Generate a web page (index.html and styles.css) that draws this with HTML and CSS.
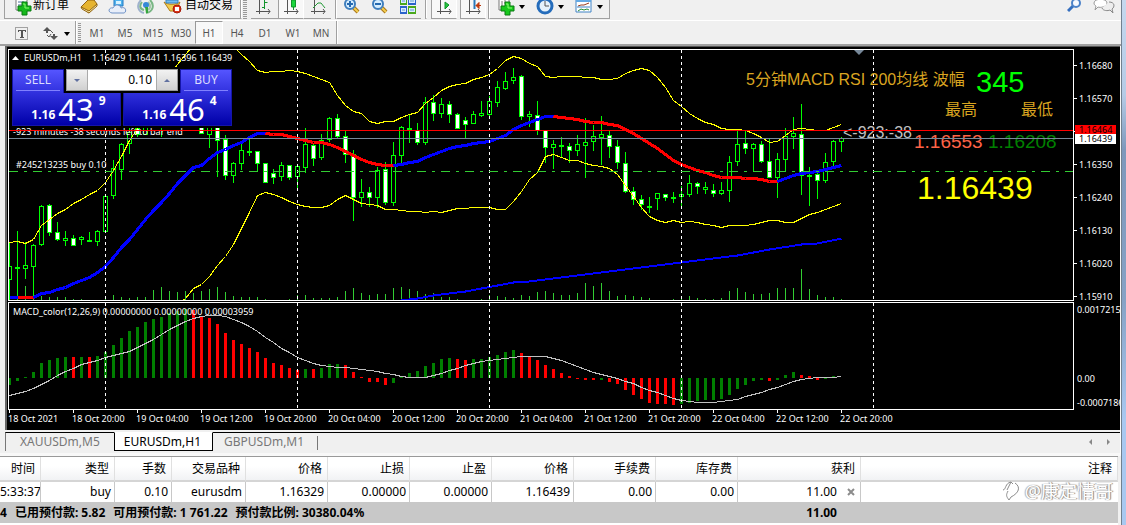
FILE: index.html
```html
<!DOCTYPE html>
<html lang="zh-CN">
<head>
<meta charset="utf-8">
<title>EURUSDm,H1</title>
<link rel="stylesheet" href="styles.css">
</head>
<body>
<div class="window">
  <header class="toolbar toolbar-main">
    <button class="tool tool-order"><svg width="18" height="18" viewBox="0 0 18 18"><path d="M2 0v10h11V0" fill="#fff" stroke="#777"/><path d="M4 2h6M4 5h4" stroke="#4a6a9a"/><path d="M8 2h5v4h4v5h-4v4H8v-4H4V6h4z" fill="#16b81c" stroke="#087a10"/><path d="M9 4h2v4h4" stroke="#8cff70" fill="none"/></svg><span>新订单</span></button>
    <button class="tool tool-book" aria-label="市场"><svg width="18" height="18" viewBox="0 0 18 18"><path d="M1 7 8 0h6l3 4-8 9z" fill="#e6b431" stroke="#916313"/><path d="m1 7 1 2 7 4 8-7V4l-8 7z" fill="#fff0a8" stroke="#916313"/></svg></button>
    <button class="tool tool-cloud" aria-label="账户"><svg width="20" height="18" viewBox="0 0 20 18"><path d="M6 0v6h9V0" fill="#51b3ed" stroke="#2179c3"/><path d="M8 1h5v3H8z" fill="#d8f2ff"/><path d="M4 13c-5-1-3-6 1-5 2-5 8-3 8 0 5-2 6 4 3 5z" fill="#e8eef9" stroke="#6e91c6"/></svg></button>
    <button class="tool tool-signal" aria-label="信号"><svg width="18" height="18" viewBox="0 0 18 18"><g fill="none" stroke-width="2"><path d="M4 0C-1 5 1 12 7 13" stroke="#9fb2cc"/><path d="M5 2c-3 4-2 7 2 8M13 0c5 5 3 12-4 13" stroke="#79b684"/><path d="M11 2c4 4 2 8-2 8" stroke="#a5c7a9"/></g><circle cx="9" cy="5" r="3" fill="#3588d8"/><path d="M8 7h3v6H9z" fill="#35a63d"/></svg></button>
    <button class="tool tool-auto"><svg width="20" height="18" viewBox="0 0 20 18"><path d="M1 2c4 3 12 3 16 0l-4 9H7z" fill="#f2cc50" stroke="#b07c18"/><path d="M3 0h12v3H3z" fill="#72bdf1" stroke="#3681bd"/><circle cx="14" cy="9" r="4" fill="#dd3518" stroke="#a71b0a"/><path d="M12 7h4v4h-4z" fill="#fff"/></svg><span>自动交易</span></button>
    <i class="rule"></i><i class="grip"></i>
    <button class="tool tool-chart" aria-label="柱状图"><svg width="16" height="18" viewBox="0 0 16 18"><path d="M3.5 0v14M0 11.5h14M12 9l2 2.5-2 2.5" stroke="#555" fill="none"/><path d="M8.5 0v9M8.5 2.5h3M6 7.5h3" stroke="#11942b"/></svg></button>
    <button class="tool tool-on" aria-label="蜡烛图"><svg width="16" height="18" viewBox="0 0 16 18"><path d="M3.5 0v14M0 11.5h14M12 9l2 2.5-2 2.5" stroke="#555" fill="none"/><path d="M9.5 0v10" stroke="#11942b"/><path d="M7.5 0h4v7h-4z" fill="#1ad63c" stroke="#11942b"/></svg></button>
    <button class="tool tool-chart" aria-label="折线图"><svg width="16" height="18" viewBox="0 0 16 18"><path d="M3.5 0v14M0 11.5h14M12 9l2 2.5-2 2.5" stroke="#555" fill="none"/><path d="M2 8 7 3l3 0 4 5" stroke="#239a36" fill="none"/></svg></button>
    <i class="rule"></i>
    <button class="tool tool-zoom" aria-label="放大"><svg width="18" height="18" viewBox="0 0 18 18"><path d="m10 7 5 5" stroke="#aa771b" stroke-width="4"/><path d="m10 7 5 5" stroke="#f4ce50" stroke-width="2"/><circle cx="7" cy="4" r="5" fill="#d6eeff" stroke="#3f7ebd" stroke-width="2"/><path d="M4 4h6M7 1v6" stroke="#266ab0" stroke-width="2"/></svg></button>
    <button class="tool tool-zoom" aria-label="缩小"><svg width="18" height="18" viewBox="0 0 18 18"><path d="m10 7 5 5" stroke="#aa771b" stroke-width="4"/><path d="m10 7 5 5" stroke="#f4ce50" stroke-width="2"/><circle cx="7" cy="4" r="5" fill="#d6eeff" stroke="#3f7ebd" stroke-width="2"/><path d="M4 4h6" stroke="#266ab0" stroke-width="2"/></svg></button>
    <button class="tool tool-zoom" aria-label="平铺窗口"><svg width="18" height="18" viewBox="0 0 18 18"><path d="M1 0h7v5H1zM9 6h8v8H9z" fill="#4aa81c"/><path d="M9 0h8v5H9zM1 6h7v8H1z" fill="#2b63cb"/><path d="M2 0h5v3H2zM10 0h6v3h-6zM2 8h5v4H2zM10 8h6v4h-6z" fill="#dcecff"/><path d="M3 10h3M11 10h4M3 1h3M11 1h4" stroke="#5d9ad0"/></svg></button>
    <i class="rule rule-wide"></i>
    <button class="tool tool-on" aria-label="自动滚动"><svg width="16" height="18" viewBox="0 0 16 18"><path d="M3.5 0v14M0 11.5h14M12 9l2 2.5-2 2.5" stroke="#555" fill="none"/><path d="m8 2 4 3-4 4z" fill="#23c43d" stroke="#11942b"/></svg></button>
    <button class="tool tool-on tool-shift" aria-label="图表平移"><svg width="16" height="18" viewBox="0 0 16 18"><path d="M3.5 0v14M0 11.5h14M12 9l2 2.5-2 2.5" stroke="#555" fill="none"/><path d="M8.5 0v9" stroke="#2979ba" stroke-width="2"/><path d="M10 5.500h5M10 5.500l3-3v6z" fill="#d94314" stroke="#b9360a"/></svg></button>
    <i class="rule"></i>
    <button class="tool tool-menu" aria-label="指标"><svg width="18" height="18" viewBox="0 0 18 18"><path d="M2 0v10h10V0" fill="#fff" stroke="#777"/><path d="M5 1v6M8 0v4" stroke="#777"/><path d="M8 2h5v4h4v5h-4v4H8v-4H4V6h4z" fill="#16c81c" stroke="#087a10"/><path d="M9 4h2v4h4" stroke="#8cff70" fill="none"/></svg><i class="caret"></i></button>
    <button class="tool tool-menu" aria-label="周期"><svg width="18" height="18" viewBox="0 0 18 18"><circle cx="9" cy="6" r="7" fill="#e6f2fb" stroke="#246cbb" stroke-width="3"/><path d="M9 1v5h4" fill="none" stroke="#555"/></svg><i class="caret"></i></button>
    <button class="tool tool-menu" aria-label="模板"><svg width="18" height="18" viewBox="0 0 18 18"><path d="M1 0h15v12H1z" fill="#fff" stroke="#4183c5"/><path d="M1 0h15v2H1z" fill="#64a9e4"/><path d="m3 6 3-1 3 0 5-2" fill="none" stroke="#963a1d"/><path d="M2 7h13" stroke="#4183c5"/><path d="m3 11 3-2 3 1 3-1 2 1" fill="none" stroke="#288d38"/></svg><i class="caret"></i></button>
    <div class="toolbar-end"></div>
    <div class="toolbar-right">
      <button class="tool" aria-label="搜索"><svg width="16" height="18" viewBox="0 0 16 18"><path d="m6 6-5 5" stroke="#356fbf" stroke-width="3"/><circle cx="9" cy="3" r="4" fill="#f6f9ff" stroke="#4c82c8" stroke-width="2"/></svg></button>
      <button class="tool" aria-label="消息"><svg width="24" height="18" viewBox="0 0 24 18"><path d="M1 3c0-5 13-5 13 0 0 4-7 5-9 4l-3 3 1-4C2 5 1 5 1 3z" fill="#fff" stroke="#999"/><path d="M9 8c1 3 6 3 8 2l3 3-1-4c3-2 3-7-3-7" fill="#eee" stroke="#888"/></svg></button>
    </div>
  </header>

  <nav class="toolbar toolbar-periods">
    <button class="tool tool-text" aria-label="文字标签"><svg width="14" height="14" viewBox="0 0 14 14"><path d="M.5.5h12v12H.5z" fill="none" stroke="#555" stroke-dasharray="1 1"/><path d="M3 3.500h8M3.500 3v2M10.500 3v2M5 10.500h4" stroke="#555" fill="none"/><path d="M7 3v8" stroke="#555" stroke-width="2"/></svg></button>
    <button class="tool tool-arrows" aria-label="箭头"><svg width="16" height="14" viewBox="0 0 16 14"><path d="m0 4 4-4 4 4H5v2H3V4zM7 9h3V7h2v2h3l-4 4z" fill="#555"/><path d="m4 8 2 2 2-3M7 3l3 3" fill="none" stroke="#555"/></svg><i class="caret"></i></button>
    <i class="rule"></i><i class="grip"></i>
    <div class="periods">
      <button>M1</button><button>M5</button><button>M15</button><button>M30</button><button class="current">H1</button><button>H4</button><button>D1</button><button>W1</button><button>MN</button>
    </div>
    <i class="rule rule-last"></i>
  </nav>

  <main class="chart">
    <svg class="plot" id="plot" viewBox="5 46 1115 384" role="img" aria-label="EURUSDm,H1"></svg>
    <section class="trade">
      <div class="trade-top">
        <button class="side">SELL</button>
        <div class="lots">
          <button aria-label="减少"><i class="down"></i></button>
          <input type="text" value="0.10" aria-label="手数">
          <button aria-label="增加"><i class="up"></i></button>
        </div>
        <button class="side">BUY</button>
      </div>
      <div class="trade-prices">
        <button class="price"><small>1.16</small><b>43</b><sup>9</sup></button>
        <button class="price"><small>1.16</small><b>46</b><sup>4</sup></button>
      </div>
    </section>
  </main>

  <nav class="tabs">
    <button class="tab">XAUUSDm,M5</button><button class="tab active">EURUSDm,H1</button><button class="tab">GBPUSDm,M1</button><i class="tab-rule"></i>
    <div class="tab-scroll"><button aria-label="向左"><i class="left"></i></button><button aria-label="向右"><i class="right"></i></button></div>
  </nav>

  <section class="terminal">
    <table>
      <colgroup><col class="c-time"><col class="c-type"><col class="c-lots"><col class="c-type"><col class="c-num"><col class="c-num"><col class="c-num"><col class="c-num"><col class="c-num"><col class="c-num"><col class="c-profit"><col></colgroup>
      <thead><tr><th>时间</th><th>类型</th><th>手数</th><th>交易品种</th><th>价格</th><th>止损</th><th>止盈</th><th>价格</th><th>手续费</th><th>库存费</th><th>获利</th><th class="note">注释</th></tr></thead>
      <tbody><tr><td>5:33:37</td><td>buy</td><td>0.10</td><td>eurusdm</td><td>1.16329</td><td>0.00000</td><td>0.00000</td><td>1.16439</td><td>0.00</td><td>0.00</td><td class="profit">11.00<button class="close" aria-label="平仓"><svg width="8" height="8" viewBox="0 0 8 8"><path d="m1 1 6 6m0-6L1 7" stroke="#8c8c8c" stroke-width="2"/></svg></button></td><td></td></tr></tbody>
      <tfoot><tr><td colspan="10"><div class="summary"><span>4</span><span>已用预付款: 5.82</span><span>可用预付款: 1 761.22</span><span>预付款比例: 30380.04%</span></div></td><td class="profit total">11.00</td><td></td></tr></tfoot>
    </table>
    <div class="watermark"><svg width="18" height="20" viewBox="0 0 18 20"><path d="M1 9c3 0 2-7 8-8l-4 8M9 1l2 2M13 2c6 4 4 10-4 14l-2 3M7 19c-3-4-3-5-1-9" fill="none" stroke="#8b8b8b"/></svg><span>@康定情哥</span></div>
  </section>
</div>
<aside class="edge"></aside>
<script src="chart.js"></script>
</body>
</html>
```

FILE: styles.css
```css
* { box-sizing: border-box; }
body {
  margin: 0;
  display: flex;
  min-height: 100vh;
  overflow: hidden;
  background: #f0f0f0;
  color: #000;
  font: 12px/16px "Noto Sans", "Noto Sans CJK SC", sans-serif;
}
button, input { font: inherit; color: inherit; margin: 0; padding: 0; border: 0; background: none; }
svg { display: block; flex: none; }
.window { flex: 1; min-width: 0; display: flex; flex-direction: column; }
.edge {
  width: 5px;
  border-left: 1px solid #71808f;
  background: linear-gradient(#c5d8ee 0, #b5cbe6 95px, #7d98bb 150px, #86a2c5 300px, #a8c8f0 420px);
}

/* toolbars */
.toolbar { display: flex; }
.toolbar-main { height: 20px; padding-left: 4px; overflow: hidden; }
.toolbar-main > * { border-bottom: 1px solid #a0a0a0; height: 19px; }
.tool { display: flex; flex: none; align-items: flex-start; }
.tool span { line-height: 10px; white-space: nowrap; }
.tool-order { width: 75px; padding-left: 9px; border-left: 1px solid #a0a0a0; gap: 1px; }
.tool-book { width: 29px; padding-left: 1px; }
.tool-cloud { width: 29px; }
.tool-signal { width: 26px; }
.tool-auto { width: 77px; gap: 2px; }
.rule { flex: none; width: 2px; border-left: 1px solid #a0a0a0; border-right: 1px solid #fff; }
.grip { flex: none; width: 9px; border: solid #f0f0f0; border-width: 0 4px 0 1px; background: repeating-linear-gradient(#999 0 1px, #f0f0f0 1px 2px); }
.tool-chart { width: 27px; padding-left: 5px; }
.tool-on { width: 26px; padding-left: 5px; background: #f8f8f8; border-left: 1px solid #a0a0a0; border-right: 1px solid #fff; }
.tool-chart + .rule { margin-left: 4px; }
.tool-on + .tool-chart { padding-left: 7px; }
.tool-zoom { width: 28px; padding-left: 6px; }
.rule-wide { margin: 0 4px; }
.tool-shift { margin-left: 3px; margin-right: 2px; }
.tool-menu { width: 39px; padding-left: 7px; gap: 4px; }
.caret { border: solid transparent; border-width: 4px 3px 0; border-top-color: #000; margin-top: 5px; }
.toolbar-end { width: 3px; border-right: 1px solid #a0a0a0; }
.toolbar-main .toolbar-right { display: flex; margin-left: auto; gap: 10px; border: 0; padding-right: 4px; }
.toolbar-periods { height: 26px; border-bottom: 2px solid #a0a0a0; border-top: 1px solid #fff; align-items: stretch; }
.tool-text { width: 43px; padding: 6px 0 0 15px; }
.tool-arrows { width: 32px; padding-top: 6px; gap: 5px; }
.toolbar-periods .grip { width: 6px; margin: 2px 0; border-right-width: 2px; }
.periods { display: flex; color: #555; font-size: 10px; line-height: 22px; }
.periods button { width: 28px; height: 23px; border: 1px solid transparent; }
.periods .current { border-color: #999 #fff #fff #999; background: #f8f8f8; }
.rule-last { margin-left: 1px; }

/* chart */
.chart { position: relative; margin-left: 5px; border-right: 1px solid #f8f8f8; background: #000; }
.plot { width: 100%; height: auto; }
.plot text { font: 9px "Noto Sans", sans-serif; fill: #fff; }
.plot .arial { font-family: "Liberation Sans", "Noto Sans CJK SC", sans-serif; }
.plot .s16 { font-size: 16px; }
.plot .s19 { font-size: 19px; }
.plot .s30 { font-size: 29px; }
.plot .s32 { font-size: 32px; }
.plot .gold { fill: #daa520; }
.plot .silver { fill: #c0c0c0; }
.plot .lime { fill: #0f0; }
.plot .tomato { fill: #ff6347; }
.plot .green { fill: #008000; }
.plot .yellow { fill: #ff0; }
.plot .black { fill: #000; }
.trade { position: absolute; left: 4px; top: 21px; padding: 2px 2px 2px 3px; background: #000; color: #fff; }
.trade-top { display: flex; gap: 2px; align-items: flex-start; }
.side { width: 52px; height: 24px; background: linear-gradient(#5555ff, #3030dd); border: 1px solid #1515a8; border-bottom: 0; color: #dcdcff; }
.side::after { content: ""; display: block; height: 1px; margin: 2px 3px 0; background: #8080ff; }
.lots { display: flex; width: 112px; height: 22px; border: 1px solid #999; background: #aaa; gap: 1px; color: #000; }
.lots button { width: 20px; background: linear-gradient(#f2f2f2, #d0d0d0); display: flex; justify-content: center; align-items: center; }
.lots input { flex: 1; min-width: 0; background: #fff; text-align: right; padding-right: 4px; }
.up, .down, .left, .right { border: 3px solid transparent; }
.down { border-top-color: #6070a0; border-bottom-width: 0; }
.up { border-bottom-color: #6070a0; border-top-width: 0; }
.trade-prices { display: grid; grid-template-columns: 1fr 1fr; gap: 2px; }
.price { height: 33px; background: linear-gradient(#3030dd, #0000a8); border: 1px solid #1515a8; border-top: 0; display: flex; justify-content: center; gap: 3px; padding-left: 4px; }
.price small { font-size: 12px; font-weight: 700; line-height: 16px; margin-top: 14px; }
.price b { font-size: 31px; line-height: 32px; font-weight: 400; }
.price sup { font-size: 12px; font-weight: 700; line-height: 16px; margin-left: 2px; }

/* chart tabs */
.tabs { display: flex; height: 26px; padding: 2px 0 0 5px; border-right: 1px solid #fff; border-bottom: 3px solid #f8f8f8; color: #777; }
.tab { height: 19px; padding: 0 14px; border-top: 1px solid #000; }
.tab:first-child { border-left: 1px solid #777; }
.tab.active { padding: 0 11px 0 9px; background: #fff; color: #000; border: 1px solid #000; border-top-color: #fff; }
.tab.active + .tab { padding: 0 13px 0 11px; }
.tab-rule { border-top: 1px solid #000; height: 19px; width: 2px; background: linear-gradient(#f0f0f0 3px, #777 3px 17px, #f0f0f0 17px) 0 0 / 1px 19px no-repeat; }
.tab-scroll { flex: 1; border-top: 1px solid #000; display: flex; justify-content: flex-end; gap: 12px; padding-right: 7px; }
.tab-scroll button { display: flex; align-items: center; width: 6px; height: 18px; }
.left { border-right-color: #888; border-left-width: 0; }
.right { border-left-color: #888; border-right-width: 0; }

/* terminal */
.terminal { position: relative; flex: 1; margin-right: 3px; border-top: 1px solid #999; background: #fff; }
table { width: 100%; border-collapse: separate; border-spacing: 0; table-layout: fixed; }
.c-time { width: 41px; }
.c-type { width: 74px; }
.c-lots { width: 57px; }
.c-num { width: 82px; }
.c-profit { width: 123px; }
th, td { padding: 0 3px 0 0; text-align: right; white-space: nowrap; overflow: hidden; }
th { height: 25px; padding-right: 5px; font-weight: 400; background: linear-gradient(#fff 40%, #f1f2f4); border-right: 1px solid #e0e0e0; border-bottom: 2px solid #d5d5d5; }
tbody td { height: 20px; border-right: 1px solid #c8c8c8; }
tbody td:last-child { border-right: 0; }
tfoot td { height: 21px; background: #c8c8c8; font-weight: 700; }
.summary { display: flex; gap: 8px; }
.profit { padding-right: 5px; }
.total { padding-right: 24px; }
.close { display: inline-flex; margin-left: 10px; }
.watermark { position: absolute; right: 5px; top: 24px; display: flex; gap: 5px; font-size: 18px; line-height: 20px; color: #fff; text-shadow: 1px 0 1px #777, -1px 0 1px #aaa; }
```

FILE: chart.js
```js
const plot = document.getElementById("plot");
const NS = "http://www.w3.org/2000/svg";

function add(name, attrs, parent = plot, text) {
  const el = document.createElementNS(NS, name);
  for (const key in attrs) el.setAttribute(key, attrs[key]);
  if (text) el.textContent = text;
  parent.appendChild(el);
  return el;
}
const col = i => 9 + 8 * i;

// kind (h rising, f falling, d doji), body top, body bottom, high, low
const candles = `h 266 279 242 300|d 267 267 231 300|h 265 268 242 279|h 245 266 244 297|h 206 244 205 246|f 205 232 204 236|f 232 239 222 241|h 238 240 231 246|f 238 245 235 246|h 237 239 236 245|d 240 240 232 242|h 231 241 230 246|h 196 231 195 232|h 168 195 160 199|h 144 169 143 180|h 132 143 128 154|f 128 134 126 137|h 120 134 118 135|h 110 120 105 125|h 105 120 100 137|h 95 110 90 120|h 90 100 85 110|f 90 105 85 120|f 100 115 95 120|f 110 133 100 134|h 120 134 115 148|f 120 140 115 177|f 139 175 135 180|h 163 175 162 183|h 150 163 144 170|d 151 151 139 156|f 151 163 151 171|f 163 182 163 183|f 173 177 169 184|h 165 176 162 181|f 165 177 165 180|h 166 176 165 188|h 144 167 128 173|f 145 158 143 166|h 140 157 134 160|h 118 139 117 142|f 118 136 114 138|f 136 154 131 163|f 154 197 150 221|h 192 197 179 207|f 192 197 187 207|h 170 197 167 208|f 169 202 162 205|h 155 202 142 206|h 127 155 126 163|d 128 128 114 143|f 130 142 123 145|h 102 142 97 145|f 102 113 95 121|h 104 113 98 118|f 104 114 101 123|f 114 128 113 129|f 120 124 117 138|h 114 123 111 124|h 113 115 101 117|h 101 114 96 118|h 87 102 81 107|h 81 88 72 90|h 77 80 68 84|f 76 116 75 120|h 114 116 111 127|f 115 130 101 135|f 130 147 130 163|h 144 147 140 169|d 145 145 137 158|f 146 150 143 163|h 144 150 135 156|h 142 145 118 178|h 136 141 125 151|h 134 137 116 165|f 135 146 131 158|f 146 162 140 169|f 163 191 152 193|f 191 199 187 205|f 199 204 195 210|d 206 206 197 213|h 193 198 193 210|f 194 197 194 201|d 197 197 192 203|h 194 196 186 208|h 183 194 175 197|f 183 186 182 194|h 187 189 182 194|f 190 193 184 197|h 190 193 182 195|h 162 190 156 202|h 144 161 131 166|f 143 148 130 154|h 144 148 143 171|f 144 161 141 163|f 161 177 139 178|h 159 177 153 198|h 136 159 128 171|h 133 136 117 149|f 134 175 104 195|d 175 175 167 206|f 174 180 171 199|h 162 180 153 183|h 141 161 140 166|h 138 141 137 152`
  .split("|").map(row => row.split(" "));

const volumes = [0,14,14,1,4,3,3,3,1,1,0,0,4,5,3,2,3,3,10,13,9,8,9,7,9,11,13,8,4,3,3,3,1,0,0,1,5,5,2,2,2,3,9,12,7,5,6,6,12,13,11,9,6,7,3,3,1,0,0,1,5,4,3,2,5,4,8,9,7,5,5,7,17,14,17,9,4,5,4,3,2,0,0,1,4,4,2,1,1,2,9,12,8,6,6,7,12,12,12,31,11,5,3,3,1];

const upper = [242,241,243,239,225,219,213,209,203,199,194,190,182,170,156,140,128,118,105,90,75,64,54,45,40,38,38,41,46,54,61,70,72,71,71,70,71,73,76,79,82,95,105,111,113,121,123,121,121,117,114,112,103,97,90,86,84,83,79,77,74,68,60,56,58,63,66,76,77,76,76,76,77,77,79,79,78,73,70,68,70,77,87,100,106,113,118,122,124,128,129,129,130,133,137,142,141,135,129,128,129,130,130,127,124];

const lower = [298,288,284,276,265,256,244,228,212,195,192,194,197,201,204,206,207,207,205,199,195,199,203,204,205,209,209,210,211,211,212,211,212,210,208,208,207,207,207,209,209,201,191,179,172,156,154,157,160,160,163,165,166,168,174,185,196,207,216,220,222,220,222,221,222,224,225,227,225,225,225,224,222,220,220,222,222,218,214,212,209,206,203];

const average = [297,297,297,297,293,292,289,287,283,280,277,272,266,257,247,239,229,219,210,202,193,183,175,167,165,158,152,149,145,142,137,133,133,134,134,136,138,140,142,142,144,147,151,155,159,162,164,165,165,164,162,161,157,154,151,148,146,145,143,142,141,138,135,129,125,122,119,116,116,117,118,119,121,122,122,124,125,129,133,138,143,148,154,160,164,167,170,172,175,177,177,177,178,178,179,181,181,178,175,173,172,171,169,167,165];

const slow = [[49,300],[51,298],[53,295],[55,293],[57,291],[59,288],[61,285],[63,282],[65,281],[67,279],[70,276],[74,272],[78,268],[82,264],[84,262],[87,259],[91,255],[95,249],[99,244],[101,243],[104,238]];

const macd = [-7,-3,1,6,15,18,20,21,21,21,21,22,26,33,40,47,51,56,59,61,65,67,69,68,61,60,54,45,38,34,30,26,20,15,13,10,8,9,9,10,14,14,13,6,1,-4,-4,-7,-5,1,5,7,12,15,19,20,19,18,19,19,21,23,26,28,25,21,18,13,9,5,2,-1,-2,-2,-2,-4,-6,-12,-17,-21,-25,-26,-26,-27,-26,-25,-23,-22,-22,-21,-17,-11,-7,-3,-2,-3,-2,3,6,3,2,-2,-1,2,0];
const falling = i => i === 8 || i === 10 || (i > 22 && i < 37) || i === 38 || (i > 41 && i < 48) || i === 56 || i === 57
  || (i > 63 && i < 84 && i !== 74) || i === 95 || (i > 98 && i < 102);

const signal = [395,393,391,388,384,380,375,371,368,364,362,360,357,355,353,351,347,343,339,334,329,325,321,318,316,315,315,316,319,322,326,331,337,342,348,352,357,360,363,365,366,367,367,368,369,370,371,373,374,376,377,377,377,375,373,370,368,365,363,361,360,359,358,357,356,356,356,356,358,360,363,366,369,372,374,376,378,381,383,387,390,392,395,398,400,401,402,402,402,401,400,399,396,394,392,389,387,384,381,379,378,377,377,377,376];

const defs = add("defs", {});
const clip = add("clipPath", { id: "frame" }, defs);
add("rect", { x: 9, y: 50, width: 1064, height: 250 }, clip);

// window bevel
add("rect", { x: 5, y: 46, width: 1115, height: 1, fill: "#555" });
add("rect", { x: 5, y: 46, width: 2, height: 384, fill: "#666" });

const main = add("g", { "clip-path": "url(#frame)", "shape-rendering": "crispEdges" });
const low = add("g", { "shape-rendering": "crispEdges" });

function line(points, color, width, parent) {
  add("polyline", { points: points.map(p => (p[0] + 0.5) + "," + (p[1] + 0.5)).join(" "), fill: "none", stroke: color, "stroke-width": width }, parent);
}
function label(x, y, value, cls = "") {
  add("text", { x, y, class: cls }, plot, value);
}

volumes.forEach((v, i) => add("rect", { x: col(i), y: 300 - v, width: 1, height: v, fill: "#32cd32" }, main));
candles.forEach(([kind, top, bottom, high, lowest], i) => {
  const x = col(i);
  add("rect", { x, y: high, width: 1, height: lowest - high, fill: "#0f0" }, main);
  add("rect", kind === "d"
    ? { x: x - 2, y: top, width: 5, height: 2, fill: "#0f0" }
    : { x: x - 1.5, y: +top + 0.5, width: 4, height: bottom - top, fill: kind === "f" ? "#fff" : "#000", stroke: "#0f0" }, main);
});

line(upper.map((y, i) => [col(i), y]), "#ff0", 1, main);
line([[182, 300], ...lower.map((y, i) => [col(i + 22), y])], "#ff0", 1, main);
[[0, 1, 0], [1, 3, 1], [3, 32, 0], [32, 48, 1], [48, 68, 0], [68, 96, 1], [96, 104, 0]].forEach(([from, to, red]) =>
  line(average.slice(from, to + 1).map((y, k) => [col(from + k), y]), red ? "#f00" : "#00f", 3, main));
line(slow.map(([i, y]) => [col(i), y]), "#00f", 2, main);

macd.forEach((v, i) => add("rect", { x: col(i) - (i ? 1 : 0), y: v > 0 ? 378 - v : 378, width: i ? 3 : 2, height: Math.abs(v), fill: falling(i) ? "#f00" : "#008000" }, low));
line(signal.map((y, i) => [col(i), y]), "#c0c0c0", 1, low);

[105, 297, 489, 681, 873].forEach(x =>
  add("path", { d: `M${x + 0.5} 50V300M${x + 0.5} 303V409`, stroke: "#fff", "stroke-dasharray": "3 3" }, low));

// overlays inside the chart
label(24, 61, "EURUSDm,H1");
label(92, 61, "1.16429 1.16441 1.16396 1.16439");
add("path", { d: "M12 60h7l-3.5-4z", fill: "#fff" });
label(13, 135, "-923 minutes -38 seconds left to bar end");
label(16, 168, "#245213235 buy 0.10");
label(13, 315, "MACD_color(12,26,9) 0.00000000 0.00000000 0.00003959");
label(746, 85, "5分钟MACD RSI 200均线 波幅", "arial s16 gold");
label(976, 92, "345", "arial s30 lime");
label(945, 115, "最高", "arial s16 gold");
label(1021, 115, "最低", "arial s16 gold");
label(843, 138, "<-923:-38", "arial s16 silver");
label(914, 148, "1.16553", "arial s19 tomato");
label(988, 148, "1.16208", "arial s19 green");
label(917, 199, "1.16439", "arial s32 yellow");
add("path", { d: "M854 50h10l-5 5z", fill: "#778899" });

const rules = add("g", { "shape-rendering": "crispEdges", fill: "none" });
add("path", { d: "M9 130.5H1073", stroke: "#f00" }, rules);
add("path", { d: "M9 138.5H1073", stroke: "#778899" }, rules);
add("path", { d: "M9 171.5H1073", stroke: "#32cd32", "stroke-dasharray": "9 6 3 6" }, rules);
add("path", { d: "M8.5 49.5H1073.5V300.5H8.5zM8.5 302.5H1073.5V409.5H8.5z", stroke: "#fff" }, rules);

// price and time axes
["1.16680", "1.16570", "", "1.16350", "1.16240", "1.16130", "1.16020", "1.15910"].forEach((value, i) => {
  const y = 65 + 33 * i;
  add("rect", { x: 1074, y, width: 3, height: 1, fill: "#fff" });
  if (value) label(1079, y + 4, value);
});
add("rect", { x: 1075, y: 125, width: 41, height: 10, fill: "#f00" });
label(1079, 133, "1.16464", "black");
add("rect", { x: 1075, y: 134, width: 41, height: 10, fill: "#fff" });
label(1079, 142, "1.16439", "black");
label(1077, 313, "0.0017215");
label(1077, 382, "0.00");
label(1077, 406, "-0.0007186");

["18 Oct 2021", "18 Oct 20:00", "19 Oct 04:00", "19 Oct 12:00", "19 Oct 20:00", "20 Oct 04:00", "20 Oct 12:00", "20 Oct 20:00", "21 Oct 04:00", "21 Oct 12:00", "21 Oct 20:00", "22 Oct 04:00", "22 Oct 12:00", "22 Oct 20:00"].forEach((value, i) => {
  add("rect", { x: 9 + 64 * i, y: 410, width: 1, height: 3, fill: "#fff" });
  label(8 + 64 * i, 422, value);
});
```
